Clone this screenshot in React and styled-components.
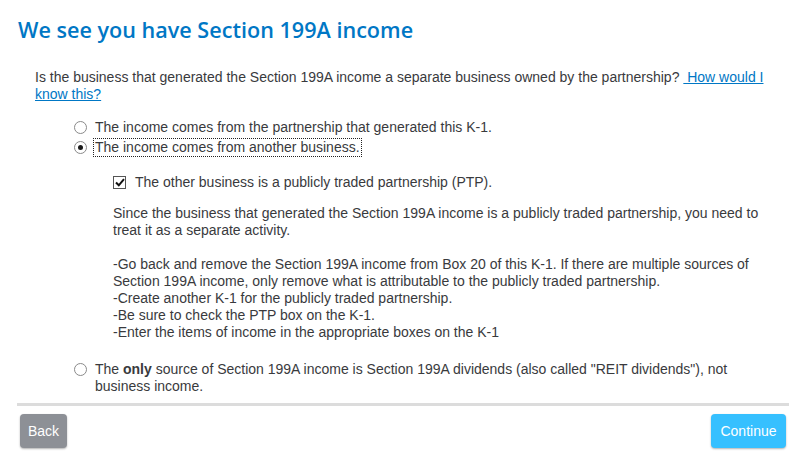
import React from "react";
import styled, { createGlobalStyle } from "styled-components";

const Global = createGlobalStyle`
  html, body { margin: 0; padding: 0; background: #fff; }
  body { font-family: "Liberation Sans", Arial, sans-serif; color: #393a3d; }
`;

const Page = styled.div`
  width: 808px;
  height: 456px;
  box-sizing: border-box;
  padding: 0 19px 0 17px;
  display: flex;
  flex-direction: column;
`;

const Title = styled.h1`
  margin: 16px 0 0 1px;
  font-family: "Open Sans", "Noto Sans", sans-serif;
  font-weight: 600;
  font-size: 21.6px;
  line-height: 28px;
  color: #0077c5;
`;

const Body = styled.div`
  padding: 0 19px 0 18px;
  margin-top: 25px;
  flex: 1;
`;

const Text = styled.p`
  margin: 0;
  font-size: 14px;
  line-height: 17px;
`;

const Link = styled.a`
  color: #0077c5;
  text-decoration: underline;
`;

const Options = styled.div`
  margin: 16px 0 0 39px;
  display: flex;
  flex-direction: column;
`;

const Option = styled.label`
  display: flex;
  align-items: flex-start;
  gap: 8px;
  font-size: 14px;
  line-height: 17px;
  min-height: 20px;
`;

const RadioDot = styled.span`
  flex: none;
  width: 11px;
  height: 11px;
  margin-top: 2px;
  border: 1px solid #8a8a8a;
  border-radius: 50%;
  background: #fff;
  display: flex;
  align-items: center;
  justify-content: center;
  &::after {
    content: "";
    width: 5px;
    height: 5px;
    border-radius: 50%;
    background: ${(p) => (p.$checked ? "#1a1a1a" : "transparent")};
  }
`;

const OptionLabel = styled.span`
  padding: 0 1px;
  border: 1px dotted ${(p) => (p.$focused ? "#222" : "transparent")};
  margin: -1px 0 0 -2px;
`;

const Strong = styled.b`
  font-weight: 700;
`;

const Nested = styled.div`
  margin: 15px 0 20px 39px;
`;

const CheckRow = styled.label`
  display: flex;
  align-items: center;
  gap: 9px;
  font-size: 14px;
  line-height: 17px;
`;

const CheckBox = styled.span`
  flex: none;
  width: 11px;
  height: 11px;
  border: 1px solid #555;
  background: #fff;
  display: flex;
  align-items: center;
  justify-content: center;
`;

const Para = styled(Text)`
  margin-top: ${(p) => p.$mt || 0}px;
`;

const Footer = styled.div`
  border-top: 3px solid #dcdcdc;
  display: flex;
  justify-content: space-between;
  padding: 8px 3px 0 3px;
  height: 48px;
  box-sizing: border-box;
  margin-bottom: 5px;
`;

const Button = styled.button`
  height: 34px;
  padding: 0 ${(p) => p.$px}px;
  border: none;
  border-radius: 4px;
  font-family: "Liberation Sans", Arial, sans-serif;
  font-size: 14px;
  color: #fff;
  background: ${(p) => p.$bg};
  box-shadow: 0 1px 2px rgba(0, 0, 0, 0.3);
`;

export default function App() {
  return (
    <>
      <Global />
      <Page>
        <Title>We see you have Section 199A income</Title>
        <Body>
          <Text>
            Is the business that generated the Section 199A income a separate
            business owned by the partnership? <Link href="#">&nbsp;How would I know this?</Link>
          </Text>
          <Options>
            <Option>
              <RadioDot />
              <OptionLabel>The income comes from the partnership that generated this K-1.</OptionLabel>
            </Option>
            <Option>
              <RadioDot $checked />
              <OptionLabel $focused>The income comes from another business.</OptionLabel>
            </Option>
            <Nested>
              <CheckRow>
                <CheckBox>
                  <svg width="10" height="9" viewBox="0 0 10 9">
                    <path d="M1 4.5 L3.8 7.3 L9 1.2" fill="none" stroke="#111" strokeWidth="2" />
                  </svg>
                </CheckBox>
                The other business is a publicly traded partnership (PTP).
              </CheckRow>
              <Para $mt={14}>
                Since the business that generated the Section 199A income is a publicly traded
                partnership, you need to treat it as a separate activity.
              </Para>
              <Para $mt={17}>
                -Go back and remove the Section 199A income from Box 20 of this K-1. If there are
                multiple sources of Section 199A income, only remove what is attributable to the
                publicly traded partnership.
                <br />
                -Create another K-1 for the publicly traded partnership.
                <br />
                -Be sure to check the PTP box on the K-1.
                <br />
                -Enter the items of income in the appropriate boxes on the K-1
              </Para>
            </Nested>
            <Option>
              <RadioDot />
              <OptionLabel>
                The <Strong>only</Strong> source of Section 199A income is Section 199A dividends (also called
                "REIT dividends"), not business income.
              </OptionLabel>
            </Option>
          </Options>
        </Body>
        <Footer>
          <Button $bg="#8d9096" $px={8}>Back</Button>
          <Button $bg="#36c0ff" $px={9.5}>Continue</Button>
        </Footer>
      </Page>
    </>
  );
}
